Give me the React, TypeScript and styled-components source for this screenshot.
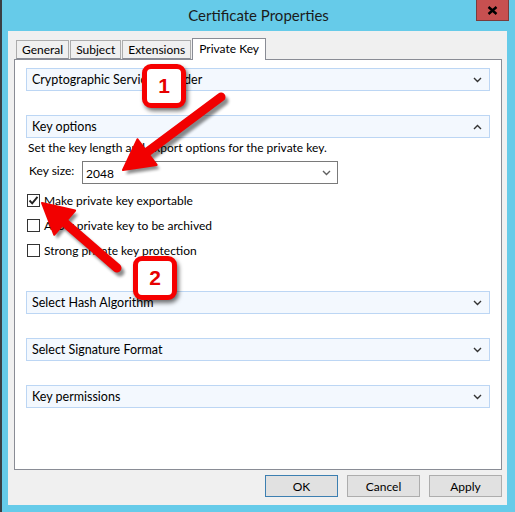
import React from 'react'
import styled, { createGlobalStyle } from 'styled-components'

const GlobalStyle = createGlobalStyle`
  html, body {
    margin: 0;
    padding: 0;
    background: #66cbe9;
  }
  * {
    box-sizing: border-box;
  }
`

const FONT = `Lato, "Noto Sans", sans-serif`

const Frame = styled.div`
  position: relative;
  width: 515px;
  height: 512px;
  background: #66cbe9;
  border-left: 2px solid #3a3f44;
  display: flex;
  flex-direction: column;
  font-family: ${FONT};
  font-size: 12px;
  color: #000;
  overflow: hidden;
`

const TitleBar = styled.div`
  position: relative;
  height: 31px;
  display: flex;
  align-items: center;
  justify-content: center;
  font-size: 15px;
  color: #1b1b1b;
  padding-bottom: 1px;
`

const CloseButton = styled.div`
  position: absolute;
  top: 0;
  right: 6px;
  width: 33px;
  height: 21px;
  background: #c75050;
  border: 1px solid #7a3c3c;
  border-top: none;
  display: flex;
  align-items: center;
  justify-content: center;
`

const Client = styled.div`
  margin: 0 6px 0 6px;
  width: 499px;
  height: 474px;
  background: #f0f0f0;
  display: flex;
  flex-direction: column;
  padding: 7px 5px 0 6px;
`

const TabStrip = styled.div`
  display: flex;
  align-items: flex-end;
  height: 21px;
  padding-left: 2px;
  position: relative;
  z-index: 1;
`

const Tab = styled.div<{ $active?: boolean }>`
  height: ${(p) => (p.$active ? '22px' : '19px')};
  margin-bottom: ${(p) => (p.$active ? '-1px' : '0')};
  padding: ${(p) => (p.$active ? '0 6px 2px' : '0 5px')};
  margin-right: ${(p) => (p.$active ? '0' : '1px')};
  border: 1px solid ${(p) => (p.$active ? '#898c95' : '#acacac')};
  border-bottom: ${(p) => (p.$active ? 'none' : '1px solid #898c95')};
  background: ${(p) => (p.$active ? '#fff' : '#f0f0f0')};
  display: flex;
  align-items: center;
  font-size: 12px;
`

const Panel = styled.div`
  width: 488px;
  height: 411px;
  background: #fff;
  border: 1px solid #898c95;
  padding: 8px 11px 0 11px;
  display: flex;
  flex-direction: column;
`

const SectionHeader = styled.div<{ $gap?: number }>`
  height: 23px;
  margin-top: ${(p) => p.$gap ?? 0}px;
  background: #f3f8fe;
  border: 1px solid #bcd6f4;
  display: flex;
  align-items: center;
  justify-content: space-between;
  padding: 0 7px 0 5px;
  font-size: 12.5px;
`

const Description = styled.div`
  margin-top: 2px;
  padding-left: 2px;
  height: 16px;
  line-height: 16px;
`

const FieldRow = styled.div`
  display: flex;
  align-items: center;
  margin-top: 5px;
  padding-left: 3px;
`

const FieldLabel = styled.div`
  width: 53px;
  padding-bottom: 4px;
`

const Combo = styled.div`
  width: 256px;
  height: 23px;
  border: 1px solid #7a7a7a;
  display: flex;
  align-items: center;
  justify-content: space-between;
  padding: 1px 6px 0 3px;
`

const CheckList = styled.div`
  display: flex;
  flex-direction: column;
  gap: 7px;
  margin-top: 7px;
  padding-left: 1px;
`

const CheckRow = styled.label`
  display: flex;
  align-items: center;
  gap: 4px;
  height: 18px;
`

const Box = styled.span`
  width: 13px;
  height: 13px;
  border: 1px solid #333;
  background: #fff;
  display: flex;
  align-items: center;
  justify-content: center;
`

const ButtonRow = styled.div`
  display: flex;
  justify-content: flex-end;
  gap: 9px;
  margin-top: 5px;
`

const DialogButton = styled.div<{ $default?: boolean }>`
  width: 73px;
  height: 22px;
  background: #e1e1e1;
  border: 1px solid ${(p) => (p.$default ? '#3c7fb1' : '#adadad')};
  display: flex;
  align-items: center;
  justify-content: center;
`

const Callout = styled.div<{ $x: number; $y: number }>`
  position: absolute;
  left: ${(p) => p.$x}px;
  top: ${(p) => p.$y}px;
  width: 44px;
  height: 44px;
  border: 5px solid #f60000;
  border-radius: 9px;
  background: #fff;
  box-shadow: 2px 3px 4px rgba(0, 0, 0, 0.55);
  display: flex;
  align-items: center;
  justify-content: center;
  color: #e60000;
  font-family: "Liberation Sans", Arial, sans-serif;
  font-size: 21px;
  font-weight: bold;
  z-index: 5;
`

const Overlay = styled.svg`
  position: absolute;
  left: -2px;
  top: 0;
  pointer-events: none;
  z-index: 4;
`

const Chevron = ({ up = false, color = '#333' }: { up?: boolean; color?: string }) => (
  <svg width="9" height="6" viewBox="0 0 9 6">
    <path
      d={up ? 'M1 5 L4.5 1.5 L8 5' : 'M1 1 L4.5 4.5 L8 1'}
      fill="none"
      stroke={color}
      strokeWidth="1.4"
    />
  </svg>
)

type Pt = [number, number]

const arrowPath = (tail: Pt, tip: Pt, headLen: number, headHalf: number) => {
  const dx = tip[0] - tail[0]
  const dy = tip[1] - tail[1]
  const len = Math.hypot(dx, dy)
  const ux = dx / len
  const uy = dy / len
  const nx = -uy
  const ny = ux
  const bx = tip[0] - ux * headLen
  const by = tip[1] - uy * headLen
  return {
    shaft: [tail, [bx + ux * 2, by + uy * 2]] as Pt[],
    head: `M${tip[0]} ${tip[1]} L${bx + nx * headHalf} ${by + ny * headHalf} L${bx - nx * headHalf} ${by - ny * headHalf} Z`,
  }
}

const Arrow = ({ tail, tip }: { tail: Pt; tip: Pt }) => {
  const a = arrowPath(tail, tip, 30, 16)
  return (
    <g>
      <g transform="translate(3 4)" opacity="0.45" filter="url(#blur)">
        <line x1={a.shaft[0][0]} y1={a.shaft[0][1]} x2={a.shaft[1][0]} y2={a.shaft[1][1]} stroke="#000" strokeWidth="9" strokeLinecap="round" />
        <path d={a.head} fill="#000" />
      </g>
      <line x1={a.shaft[0][0]} y1={a.shaft[0][1]} x2={a.shaft[1][0]} y2={a.shaft[1][1]} stroke="#f20000" strokeWidth="9" strokeLinecap="round" />
      <path d={a.head} fill="#f20000" stroke="#f20000" strokeWidth="2" strokeLinejoin="round" />
    </g>
  )
}

const sections = ['Select Hash Algorithm', 'Select Signature Format', 'Key permissions']

const App: React.FC = () => {
  return (
    <>
      <GlobalStyle />
      <Frame>
        <TitleBar>
          Certificate Properties
          <CloseButton>
            <svg width="11" height="9" viewBox="0 0 11 9">
              <path d="M1.5 1 L9.5 8 M9.5 1 L1.5 8" stroke="#000" strokeWidth="2.4" />
            </svg>
          </CloseButton>
        </TitleBar>
        <Client>
          <TabStrip>
            <Tab>General</Tab>
            <Tab>Subject</Tab>
            <Tab>Extensions</Tab>
            <Tab $active>Private Key</Tab>
          </TabStrip>
          <Panel>
            <SectionHeader>
              Cryptographic Service Provider
              <Chevron />
            </SectionHeader>
            <SectionHeader $gap={24}>
              Key options
              <Chevron up />
            </SectionHeader>
            <Description>Set the key length and export options for the private key.</Description>
            <FieldRow>
              <FieldLabel>Key size:</FieldLabel>
              <Combo>
                2048
                <Chevron color="#606060" />
              </Combo>
            </FieldRow>
            <CheckList>
              <CheckRow>
                <Box>
                  <svg width="11" height="11" viewBox="0 0 11 11">
                    <path d="M1.5 5.5 L4.2 8.3 L9.5 1.8" fill="none" stroke="#222" strokeWidth="1.9" />
                  </svg>
                </Box>
                Make private key exportable
              </CheckRow>
              <CheckRow>
                <Box />
                Allow private key to be archived
              </CheckRow>
              <CheckRow>
                <Box />
                Strong private key protection
              </CheckRow>
            </CheckList>
            {sections.map((s, i) => (
              <SectionHeader key={s} $gap={i === 0 ? 32 : 24}>
                {s}
                <Chevron />
              </SectionHeader>
            ))}
          </Panel>
          <ButtonRow>
            <DialogButton $default>OK</DialogButton>
            <DialogButton>Cancel</DialogButton>
            <DialogButton>Apply</DialogButton>
          </ButtonRow>
        </Client>
        <Overlay width="515" height="512" viewBox="0 0 515 512">
          <defs>
            <filter id="blur" x="-20%" y="-20%" width="140%" height="140%">
              <feGaussianBlur stdDeviation="1.5" />
            </filter>
          </defs>
          <Arrow tail={[221, 97]} tip={[123, 170]} />
          <Arrow tail={[117, 268]} tip={[42, 203]} />
        </Overlay>
        <Callout $x={140} $y={64}>1</Callout>
        <Callout $x={131} $y={256}>2</Callout>
      </Frame>
    </>
  )
}

export default App
